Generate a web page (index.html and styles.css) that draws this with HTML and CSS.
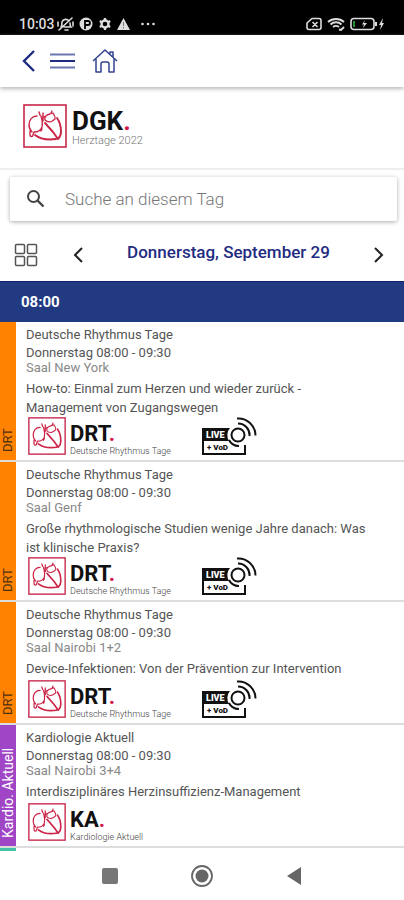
FILE: index.html
```html
<!DOCTYPE html>
<html lang="de">
<head>
<meta charset="utf-8">
<meta name="viewport" content="width=device-width, initial-scale=1">
<title>DGK Herztage 2022</title>
<link rel="stylesheet" href="styles.css">
</head>
<body>
<svg class="sprite" aria-hidden="true">
  <symbol id="heart" viewBox="0 0 44 44">
    <rect x="1" y="1" width="42" height="42" fill="#fff" stroke="#c8284c" stroke-width="1.6"/>
    <g fill="none" stroke="#cb2447" stroke-linecap="round" stroke-linejoin="round">
      <path d="M16 8l1 3M14 12c-5 0-8 4-8 9 0 3 1 5 3 7M7 27v4c0 2 3 2 3 0l1-3c4 0 7-2 8-5 1-4 0-7-1-11M20 17V9M19 25l-1 2" stroke-width="1.4"/>
      <path d="M22 16c-1-3 1-5 5-6l3-1c1 2 3 4 2 6-3 3-7 4-10 1zM28 9l1-2M20 13l3-1" stroke-width="1.3"/>
      <path d="M12 31c5 4 14 5 21 4M34 14c3 4 4 9 4 14 0 3-1 5-3 7M22 19l8 9 5 7" stroke-width="1.9"/>
    </g>
  </symbol>
  <symbol id="live" viewBox="0 0 56 40">
    <path d="M1 11h28a11 11 0 0 0-1 13H1z" fill="#111"/>
    <path d="M2 23v14h42v-9" fill="none" stroke="#111" stroke-width="2"/>
    <circle cx="37" cy="18" r="6.5" fill="#fff" stroke="#111" stroke-width="2"/>
    <path d="M28 23a11 11 0 0 0 10 6M37 6.500a11.500 11.500 0 0 1 11.500 12.500M36 1.500a17 17 0 0 1 18.500 17" fill="none" stroke="#111" stroke-width="2"/>
  </symbol>
</svg>

<div class="status">
  <span class="clock">10:03</span>
  <svg class="status-left" width="100" height="16" viewBox="0 0 100 16" aria-hidden="true">
    <g fill="none" stroke="#ddd" stroke-width="1.600" stroke-linecap="round">
      <path d="M4 11c1-1 1-3 1-5a4 4 0 0 1 7-1M13 7c0 2 0 3 1 4H7M8 14h3M2 14L15 2M1 6v4M16 6v4"/>
    </g>
    <circle cx="29" cy="8" r="6.500" fill="#ddd"/><path d="M28 13V5h3a2 2 0 0 1 0 4h-3" fill="none" stroke="#000" stroke-width="1.800"/>
    <circle cx="48" cy="8" r="3.500" fill="none" stroke="#ddd" stroke-width="2.400"/>
    <path d="M48 2v2M48 12v2M42.800 5l1.800 1M51.400 10l1.800 1M42.800 11l1.800-1M51.400 6l1.800-1" stroke="#ddd" stroke-width="2.400"/>
    <path d="M66.500 2L73 14H60z" fill="#ddd"/><path d="M66.500 6v4M66.500 11v1.500" stroke="#777"/>
    <g fill="#ddd"><circle cx="85.500" cy="8" r="1.300"/><circle cx="91" cy="8" r="1.300"/><circle cx="96.500" cy="8" r="1.300"/></g>
  </svg>
  <svg class="status-right" width="80" height="16" viewBox="0 0 80 16" aria-hidden="true">
    <g fill="none" stroke="#ddd" stroke-width="1.600">
      <path d="M6 2.500h7a2 2 0 0 1 2 2v7a2 2 0 0 1-2 2H3a2 2 0 0 1-2-2V7zM6.500 6l5 5M11.500 6l-5 5"/>
      <path d="M22 6a12 12 0 0 1 16 0M24.500 8.500a8 8 0 0 1 11 0M27 11a5 5 0 0 1 6 0M33 13.500l2 .5 3-3" stroke-width="1.900"/>
      <rect x="45" y="2.500" width="23" height="11" rx="3"/>
    </g>
    <path d="M48 5v6" stroke="#2f8f32" stroke-width="2"/>
    <path d="M59 4l-3 4.500h2l-1 3.500 4-5h-3zM69 6h2v4h-2zM77 2l-4 7h2l-1 5 4-7h-2z" fill="#ddd"/>
  </svg>
</div>

<header class="appbar">
  <button aria-label="Zurück"><svg width="14" height="22" viewBox="0 0 14 22"><path d="M12 1L2 11l10 10" fill="none" stroke="#1d2c80" stroke-width="2.400"/></svg></button>
  <button class="menu" aria-label="Menü"><svg width="25" height="16" viewBox="0 0 25 16"><path d="M0 1.500h25M0 14.500h25" stroke="#6a76b0" stroke-width="2"/><path d="M0 8h25" stroke="#1d2c80" stroke-width="2"/></svg></button>
  <a class="home" href="#" aria-label="Startseite"><svg width="26" height="26" viewBox="0 0 26 26"><path d="M1 13L13 2l12 11M4 11v13h5v-8c0-1 1-2 2-2h4c1 0 2 1 2 2v8h5V11M18 6V4h3v5" fill="none" stroke="#33438f" stroke-width="1.500" stroke-linejoin="round"/></svg></a>
</header>

<div class="brand">
  <svg class="brand-mark" viewBox="0 0 44 44" aria-hidden="true"><use href="#heart"/></svg>
  <div><div class="brand-name">DGK<i>.</i></div><div class="brand-sub">Herztage 2022</div></div>
</div>

<main>
  <label class="search">
    <svg width="20" height="20" viewBox="0 0 20 20" aria-hidden="true"><circle cx="7.500" cy="7.500" r="5.500" fill="none" stroke="#444" stroke-width="2"/><path d="M11.500 11.500l6 6" stroke="#444" stroke-width="2.400"/></svg>
    <input type="search" placeholder="Suche an diesem Tag" aria-label="Suche an diesem Tag">
  </label>

  <nav class="days">
    <button aria-label="Übersicht"><svg width="24" height="24" viewBox="0 0 24 24"><g fill="none" stroke="#555" stroke-width="1.500"><rect x="1.500" y="1.500" width="9" height="9" rx="1"/><rect x="13.500" y="1.500" width="9" height="9" rx="1"/><rect x="1.500" y="13.500" width="9" height="9" rx="1"/><rect x="13.500" y="13.500" width="9" height="9" rx="1"/></g></svg></button>
    <button class="prev" aria-label="Vorheriger Tag"><svg width="10" height="16" viewBox="0 0 10 16"><path d="M9 1L2 8l7 7" fill="none" stroke="#222" stroke-width="2"/></svg></button>
    <h1>Donnerstag, September 29</h1>
    <button aria-label="Nächster Tag"><svg width="10" height="16" viewBox="0 0 10 16"><path d="M1 1l7 7-7 7" fill="none" stroke="#222" stroke-width="2"/></svg></button>
  </nav>

  <h2 class="time">08:00</h2>

  <article class="session">
    <div class="track">DRT</div>
    <div class="info">
      <p>Deutsche Rhythmus Tage</p><p>Donnerstag 08:00 - 09:30</p><p class="room">Saal New York</p>
      <h3>How-to: Einmal zum Herzen und wieder zurück - Management von Zugangswegen</h3>
      <div class="logos">
        <svg class="mark" viewBox="0 0 44 44" aria-hidden="true"><use href="#heart"/></svg>
        <div class="series"><div class="series-name">DRT<i>.</i></div><div class="series-sub">Deutsche Rhythmus Tage</div></div>
        <svg class="live" viewBox="0 0 56 40"><use href="#live"/><text x="5" y="21" class="live-word">LIVE</text><text x="6" y="33" class="vod-word">+ VoD</text></svg>
      </div>
    </div>
  </article>

  <article class="session">
    <div class="track">DRT</div>
    <div class="info">
      <p>Deutsche Rhythmus Tage</p><p>Donnerstag 08:00 - 09:30</p><p class="room">Saal Genf</p>
      <h3>Große rhythmologische Studien wenige Jahre danach: Was ist klinische Praxis?</h3>
      <div class="logos">
        <svg class="mark" viewBox="0 0 44 44" aria-hidden="true"><use href="#heart"/></svg>
        <div class="series"><div class="series-name">DRT<i>.</i></div><div class="series-sub">Deutsche Rhythmus Tage</div></div>
        <svg class="live" viewBox="0 0 56 40"><use href="#live"/><text x="5" y="21" class="live-word">LIVE</text><text x="6" y="33" class="vod-word">+ VoD</text></svg>
      </div>
    </div>
  </article>

  <article class="session">
    <div class="track">DRT</div>
    <div class="info">
      <p>Deutsche Rhythmus Tage</p><p>Donnerstag 08:00 - 09:30</p><p class="room">Saal Nairobi 1+2</p>
      <h3>Device-Infektionen: Von der Prävention zur Intervention</h3>
      <div class="logos">
        <svg class="mark" viewBox="0 0 44 44" aria-hidden="true"><use href="#heart"/></svg>
        <div class="series"><div class="series-name">DRT<i>.</i></div><div class="series-sub">Deutsche Rhythmus Tage</div></div>
        <svg class="live" viewBox="0 0 56 40"><use href="#live"/><text x="5" y="21" class="live-word">LIVE</text><text x="6" y="33" class="vod-word">+ VoD</text></svg>
      </div>
    </div>
  </article>

  <article class="session">
    <div class="track kardio">Kardio. Aktuell</div>
    <div class="info">
      <p>Kardiologie Aktuell</p><p>Donnerstag 08:00 - 09:30</p><p class="room">Saal Nairobi 3+4</p>
      <h3>Interdisziplinäres Herzinsuffizienz-Management</h3>
      <div class="logos">
        <svg class="mark" viewBox="0 0 44 44" aria-hidden="true"><use href="#heart"/></svg>
        <div class="series"><div class="series-name">KA<i>.</i></div><div class="series-sub">Kardiologie Aktuell</div></div>
      </div>
    </div>
  </article>
  <div class="next-track"></div>
</main>

<footer class="system">
  <button aria-label="Letzte Apps"><svg width="24" height="24" viewBox="0 0 24 24"><rect x="4" y="4" width="16" height="16" rx="2" fill="#777"/></svg></button>
  <button aria-label="Home"><svg width="24" height="24" viewBox="0 0 24 24"><circle cx="12" cy="12" r="10" fill="none" stroke="#666" stroke-width="1.800"/><circle cx="12" cy="12" r="6.500" fill="#666"/></svg></button>
  <button aria-label="Zurück"><svg width="24" height="24" viewBox="0 0 24 24"><path d="M5 12l14-9v18z" fill="#666"/></svg></button>
</footer>
</body>
</html>
```
FILE: styles.css
```css
* { box-sizing: border-box; }
body { margin: 0; background: #fff; color: #555; font-family: Roboto, "Liberation Sans", sans-serif; }
h1, h2, h3, p { margin: 0; font-weight: 400; }
i { color: #d5174a; font-style: normal; }
svg { display: block; flex: none; }
button { padding: 0; border: 0; background: none; }
.sprite { position: absolute; width: 0; height: 0; }

.status { display: flex; align-items: center; height: 35px; padding: 12px 18px 0 19px; background: #000; color: #ddd; }
.clock { font-size: 14px; font-weight: 500; line-height: 16px; }
.status-left { margin-left: 2px; }
.status-right { margin-left: auto; }

.appbar { display: flex; align-items: center; height: 52px; padding: 0 22px; box-shadow: 0 2px 4px #bbb; }
.menu { margin-left: 14px; }
.home { margin-left: 17px; }

.brand { display: flex; gap: 5px; height: 83px; padding: 17px 23px 0; border-bottom: 2px solid #eee; }
.brand-mark { width: 44px; height: 44px; }
.brand-name { margin-top: 3px; color: #111; font-size: 26px; font-weight: 700; line-height: 28px; }
.brand-sub { color: #777; font-size: 11px; font-weight: 300; line-height: 12px; }

.search { display: flex; align-items: center; gap: 19px; height: 44px; margin: 7px 7px 0 10px; padding: 0 16px; border-radius: 2px; box-shadow: 0 1px 4px #aaa; }
.search input { flex: 1; min-width: 0; padding: 0; border: 0; outline: 0; background: none; color: #555; font: 300 17px Roboto, sans-serif; }
.search input::placeholder { color: #777; opacity: 1; }

.days { display: flex; align-items: center; height: 60px; padding: 8px 20px 0 14px; }
.prev { margin-left: 35px; }
.days h1 { flex: 1; padding-bottom: 6px; color: #1f2c82; font-size: 17px; font-weight: 500; line-height: 20px; text-align: center; }

.time { height: 41px; padding-left: 21px; border-top: 1px solid #101f70; background: #213a82; color: #fff; font-size: 15px; font-weight: 700; line-height: 40px; }

.session { display: flex; border-bottom: 2px solid #ddd; }
.track { width: 16px; padding-top: 8px; background: #ff8200; color: #4d3010; font-size: 13px; line-height: 16px; writing-mode: vertical-rl; transform: rotate(180deg); }
.kardio { background: #a045c5; color: #fff; font-size: 14px; }
.info { flex: 1; min-width: 0; padding: 4px 24px 5px 10px; }
.info p { font-size: 13px; line-height: 18px; }
.info .room { color: #888; line-height: 12px; }
.info h3 { min-height: 21px; margin-top: 5px; font-size: 13px; line-height: 19px; }
.logos { display: flex; gap: 4px; height: 38px; padding-left: 2px; }
.mark { width: 38px; height: 38px; }
.series { width: 127px; }
.series-name { margin-top: 4px; color: #111; font-size: 22px; font-weight: 700; line-height: 25px; }
.series-sub { color: #444; font-size: 9px; font-weight: 300; line-height: 10px; }
.live { width: 56px; height: 40px; }
.live-word, .vod-word { font-family: Roboto, sans-serif; font-weight: 900; }
.live-word { fill: #fff; font-size: 9px; }
.vod-word { fill: #111; font-size: 8px; }
.next-track { width: 16px; height: 3px; background: #45bfa5; }

.system { display: flex; align-items: center; justify-content: center; gap: 68px; height: 49px; }
```
